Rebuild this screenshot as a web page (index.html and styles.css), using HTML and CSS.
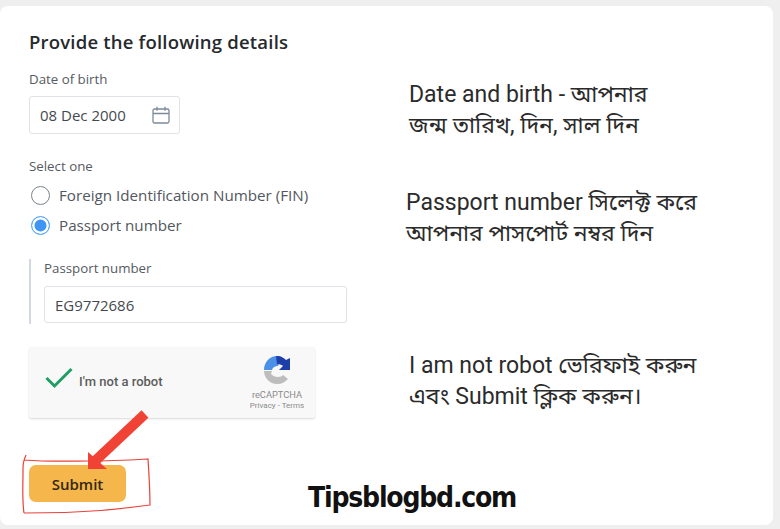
FILE: index.html
```html
<!DOCTYPE html>
<html lang="en">
<head>
<meta charset="utf-8">
<title>Provide the following details</title>
<link rel="stylesheet" href="styles.css">
</head>
<body>
<main class="card">
  <section class="form">
    <h1 class="title">Provide the following details</h1>
    <div class="label">Date of birth</div>
    <div class="input date">
      <span>08 Dec 2000</span>
      <svg class="cal" viewBox="0 0 18 18" width="18" height="18" fill="none" stroke="#7d8a9c" stroke-width="1.3"><rect x="1" y="3" width="16" height="14" rx="1.5"/><path d="M1 7.5h16M5 .8v4M13 .8v4"/></svg>
    </div>
    <div class="label select">Select one</div>
    <div class="radio"><span class="dot"></span>Foreign Identification Number (FIN)</div>
    <div class="radio second"><span class="dot on"></span>Passport number</div>
    <div class="sub">
      <div class="label">Passport number</div>
      <div class="input pass">EG9772686</div>
    </div>
    <div class="captcha">
      <svg class="tick" viewBox="0 0 28 22" width="28" height="22" fill="none" stroke="#1f9d63" stroke-width="3"><path d="M1.5 11l8 8L26.500 2"/></svg>
      <span class="robot">I'm not a robot</span>
      <div class="brand">
        <svg viewBox="0 0 30 30" width="30" height="30"><path d="M2 15C2 7 8 1 15 1c2 0 4 .5 5 1l-4 9c-3 0-5 1-6 4l3 0H2z" fill="#4a90e8"/><path d="M14 1c5 0 8 2 10 4l4-2v12H17l4-4c-1-1-3-2-6-2z" fill="#1f3fa8"/><path d="M2 16h8l-1 3c2 2 4 3 7 3 3 0 4-1 5-2l5 4c-3 3-6 5-11 5C8 29 2 23 2 16z" fill="#bdbdbd"/></svg>
        <div class="rc">reCAPTCHA</div>
        <div class="pt">Privacy - Terms</div>
      </div>
    </div>
    <div class="actions"><button class="submit">Submit</button></div>
  </section>
  <section class="notes">
    <p class="note n1">Date and birth - আপনার<br>জন্ম তারিখ, দিন, সাল দিন</p>
    <p class="note n2">Passport number সিলেক্ট করে<br>আপনার পাসপোর্ট নম্বর দিন</p>
    <p class="note n3">I am not robot ভেরিফাই করুন<br>এবং Submit ক্লিক করুন।</p>
    <div class="site">Tipsblogbd.com</div>
  </section>
  <svg class="markup" viewBox="0 0 140 120" width="140" height="120" fill="none">
    <path d="M6 55C3 62 3 64 3 72c0 14-1 28 1 41 M4 60c25 2 50 1 65 1 20 0 40-1 59-2 1 15 2 30 2 46-30 4-60 8-126 8" stroke="#e8413a" stroke-width="1.200"/>
    <path d="M125 14L75 61" stroke="#f04235" stroke-width="10"/>
    <path d="M68 52v17h19z" fill="#f04235"/>
  </svg>
</main>
</body>
</html>
```
FILE: styles.css
```css
html, body { margin: 0; padding: 0; }
body {
  width: 780px;
  height: 529px;
  overflow: hidden;
  background: #efefef;
  font-family: "Open Sans", "Noto Sans", sans-serif;
  color: #3d4248;
}
.card {
  position: relative;
  display: flex;
  box-sizing: border-box;
  width: 773px;
  height: 519px;
  margin-top: 6px;
  background: #fff;
  border-radius: 8px;
  overflow: hidden;
}
.form { width: 379px; box-sizing: border-box; padding: 24px 0 0 29px; flex: none; }
.title { margin: 0 0 16px; font-size: 18.500px; line-height: 24px; font-weight: 600; letter-spacing: .2px; color: #26292d; }
.label { font-size: 13.300px; line-height: 18px; color: #555b62; }
.input {
  box-sizing: border-box;
  display: flex;
  align-items: center;
  height: 38px;
  background: #fff;
  border: 1px solid #dfe2e6;
  border-radius: 3px;
  font-size: 15px;
  color: #44494f;
  padding-left: 10px;
}
.date { width: 151px; margin-top: 8px; justify-content: space-between; padding-right: 9px; }
.select { margin-top: 23px; }
.radio { display: flex; align-items: center; gap: 9px; height: 30px; margin-top: 5px; font-size: 15.200px; color: #52575e; margin-left: 2px; }
.second { margin-top: 0; }
.dot { box-sizing: border-box; width: 19px; height: 19px; border-radius: 50%; border: 1.500px solid #7e8287; background: #fff; flex: none; }
.dot.on { border: 1.500px solid #5aa9f5; box-shadow: inset 0 0 0 2.500px #fff; background: #3f95f6; }
.sub { margin-top: 19px; height: 65px; border-left: 2px solid #d3d8e2; padding-left: 13px; box-sizing: border-box; }
.sub .label { margin-top: 1px; }
.pass { width: 303px; height: 37px; margin-top: 9px; }
.captcha {
  box-sizing: border-box;
  width: 286px;
  height: 71px;
  margin-top: 23px;
  display: flex;
  align-items: center;
  background: #f8f8f8;
  border-radius: 2px;
  box-shadow: 0 1px 2px #d9d9d9;
  padding-left: 16px;
}
.tick { flex: none; margin-top: -10px; }
.robot { margin: -3px 0 0 6px; font-family: Roboto, sans-serif; font-size: 13px; font-weight: 500; color: #5c5c5c; }
.brand { margin-left: auto; width: 60px; margin-right: 8px; display: flex; flex-direction: column; align-items: center; font-family: Roboto, sans-serif; color: #8a8a8a; }
.rc { font-size: 9.300px; line-height: 11px; margin-top: 4px; }
.pt { font-size: 8px; line-height: 11px; }
.actions { margin-top: 47px; }
.submit {
  width: 97px;
  height: 37px;
  padding: 0;
  border: 0;
  border-radius: 7px;
  background: #f5b64c;
  font-family: "Open Sans", sans-serif;
  font-size: 15px;
  font-weight: 600;
  color: #33280f;
}
.notes { flex: 1; position: relative; font-family: Roboto, "Noto Sans Bengali", "Noto Sans", sans-serif; }
.note { margin: 0; font-size: 23px; line-height: 30.500px; color: #2b2b2b; }
.n1 { margin: 74px 0 0 30px; }
.n2 { margin: 47px 0 0 27px; }
.n3 { margin: 102px 0 0 30px; }
.site { margin: 69px 0 0 -71px; font-family: "DejaVu Sans Condensed", "DejaVu Sans", sans-serif; font-size: 28px; line-height: 34px; font-weight: 700; letter-spacing: -1.200px; color: #111; }
.markup { position: absolute; left: 20px; top: 394px; overflow: visible; }
```
